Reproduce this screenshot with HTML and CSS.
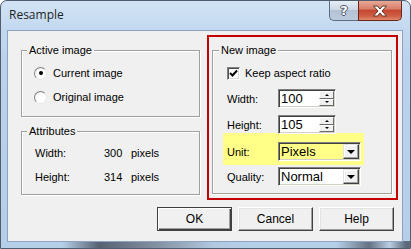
FILE: index.html
```html
<!DOCTYPE html>
<html>
<head>
<meta charset="utf-8">
<link rel="stylesheet" href="styles.css">
</head>
<body>
<div class="window">
  <div class="titlebar">
    <span class="title">Resample</span>
    <div class="caption-btns">
      <div class="cbtn cbtn-help"><span class="qmark">?</span></div>
      <div class="cbtn cbtn-close">
        <svg width="16" height="12" viewBox="0 0 16 12"><path d="M1.5 1 H5.5 L8 4 L10.5 1 H14.5 L10 6 L14.5 11 H10.5 L8 8 L5.5 11 H1.5 L6 6 Z" fill="#fff" stroke="#5a3026" stroke-width="1" stroke-linejoin="round"/></svg>
      </div>
    </div>
  </div>
  <div class="client">
    <div class="main">
      <div class="left-col">
        <fieldset class="group active-group">
          <legend>Active image</legend>
          <div class="radio-row"><span class="radio checked"></span><span>Current image</span></div>
          <div class="radio-row"><span class="radio"></span><span>Original image</span></div>
        </fieldset>
        <fieldset class="group attr-group">
          <legend>Attributes</legend>
          <div class="attr-row"><span class="attr-label">Width:</span><span class="attr-val">300</span><span>pixels</span></div>
          <div class="attr-row"><span class="attr-label">Height:</span><span class="attr-val">314</span><span>pixels</span></div>
        </fieldset>
      </div>
      <div class="red-box">
        <fieldset class="group new-group">
          <legend>New image</legend>
          <div class="check-row">
            <span class="checkbox"><svg width="9" height="9" viewBox="0 0 9 9"><path d="M1 4 L3.5 6.5 L8 1.5" fill="none" stroke="#000" stroke-width="2"/></svg></span>
            <span>Keep aspect ratio</span>
          </div>
          <div class="field-row width-row">
            <span class="field-label">Width:</span>
            <div class="spin"><span class="spin-text">100</span><div class="spin-btns"><span class="sbtn"><i class="up"></i></span><span class="sbtn"><i class="down"></i></span></div></div>
          </div>
          <div class="field-row height-row">
            <span class="field-label">Height:</span>
            <div class="spin"><span class="spin-text">105</span><div class="spin-btns"><span class="sbtn"><i class="up"></i></span><span class="sbtn"><i class="down"></i></span></div></div>
          </div>
          <div class="highlight">
            <div class="field-row">
              <span class="field-label">Unit:</span>
              <div class="combo combo-yellow"><span class="combo-text">Pixels</span><span class="drop"><i></i></span></div>
            </div>
          </div>
          <div class="field-row quality-row">
            <span class="field-label">Quality:</span>
            <div class="combo"><span class="combo-text">Normal</span><span class="drop"><i></i></span></div>
          </div>
        </fieldset>
      </div>
    </div>
    <div class="btn-row">
      <div class="btn btn-default">OK</div>
      <div class="btn">Cancel</div>
      <div class="btn">Help</div>
    </div>
  </div>
</div>
</body>
</html>
```

FILE: styles.css
```css
html, body {
  margin: 0;
  padding: 0;
  background: #fff;
}

body {
  font-family: "Liberation Sans", Arial, sans-serif;
  font-size: 11px;
  color: #000;
}

.window {
  width: 411px;
  height: 249px;
  box-sizing: border-box;
  border: 1px solid #4f5d6e;
  border-radius: 7px 7px 0 0;
  padding: 0 7px 6px 6px;
  display: flex;
  flex-direction: column;
  background:
    linear-gradient(to right, rgba(0,0,0,0) 15%, rgba(70,78,92,0.85) 24%, rgba(110,118,130,0.7) 38%, rgba(170,190,212,0.4) 52%, rgba(0,0,0,0) 60%, rgba(0,0,0,0) 82%, rgba(80,90,104,0.8) 90%, rgba(190,205,222,0.5) 95%, rgba(70,80,95,0.8) 99%) left bottom / 100% 7px no-repeat,
    linear-gradient(to bottom, #d3e3f5 0, #c3d9f0 28px, #bad2ec 60px, #b6cfe9 100%);
}

.titlebar {
  height: 29px;
  display: flex;
  justify-content: space-between;
  align-items: flex-start;
  flex: none;
}

.title {
  font-family: "Open Sans", "Liberation Sans", sans-serif;
  font-size: 12px;
  line-height: 16px;
  margin-top: 6px;
  padding-left: 2px;
  color: #1e1e1e;
}

.caption-btns {
  display: flex;
  margin-right: 1px;
}

.cbtn {
  height: 20px;
  box-sizing: border-box;
  display: flex;
  align-items: center;
  justify-content: center;
  border: 1px solid #5d6e84;
  border-top: none;
}

.cbtn-help {
  width: 29px;
  border-right: none;
  border-radius: 0 0 0 5px;
  background: linear-gradient(to bottom, #e6edf5 0, #cdd9e6 45%, #b3c3d5 50%, #bccbdc 100%);
}

.qmark {
  font-family: "DejaVu Sans", sans-serif;
  font-weight: bold;
  font-size: 13px;
  line-height: 14px;
  color: #fff;
  text-shadow: 1px 0 0 #4d5563, -1px 0 0 #4d5563, 0 1px 0 #4d5563, 0 -1px 0 #4d5563;
}

.cbtn-close {
  width: 44px;
  border-color: #6a2418;
  border-radius: 0 0 5px 0;
  background: linear-gradient(to bottom, #e9a896 0, #d9816d 40%, #c4492f 50%, #cf5f45 80%, #e08a6c 100%);
}

.client {
  flex: 1;
  box-sizing: border-box;
  border: 1px solid #8da3bf;
  background: #f0f0f0;
  display: flex;
  flex-direction: column;
}

.main {
  display: flex;
  align-items: flex-start;
  padding: 4px 0 0 13px;
  gap: 7px;
}

.left-col {
  width: 179px;
  margin-top: 9px;
  display: flex;
  flex-direction: column;
}

.group {
  margin: 0;
  padding: 0;
  border: 1px solid #a0a0a0;
  box-shadow: 1px 1px 0 #fff, inset 1px 1px 0 #fff;
  min-width: 0;
}

.group legend {
  padding: 0 2px;
  margin-left: 5px;
  line-height: 13px;
  height: 13px;
  background: #f0f0f0;
}

.active-group {
  padding: 4px 0 7px 12px;
}

.active-group legend {
  margin-left: -7px;
}

.radio-row {
  height: 24px;
  display: flex;
  align-items: center;
}

.radio {
  width: 13px;
  height: 13px;
  box-sizing: border-box;
  border-radius: 50%;
  border: 1px solid;
  border-color: #808080 #e8e8e8 #e8e8e8 #808080;
  background: radial-gradient(circle at 60% 60%, #fff 0, #fff 45%, #e4e4e4 100%);
  margin-right: 6px;
  display: flex;
  align-items: center;
  justify-content: center;
}

.radio.checked::after {
  content: "";
  width: 4px;
  height: 4px;
  border-radius: 50%;
  background: #000;
}

.attr-group {
  margin-top: 8px;
  padding: 3px 0 5px 13px;
}

.attr-group legend {
  margin-left: -8px;
}

.attr-row {
  height: 24px;
  display: flex;
  align-items: center;
}

.attr-label {
  width: 69px;
}

.attr-val {
  width: 27px;
}

.red-box {
  width: 191px;
  box-sizing: border-box;
  border: 2px solid #c40000;
  padding: 7px 4px 4px 3px;
}

.new-group {
  padding: 0 0 7px 14px;
}

.new-group legend {
  margin-left: -8px;
}

.check-row {
  margin-top: 9px;
  height: 14px;
  display: flex;
  align-items: center;
}

.checkbox {
  width: 13px;
  height: 13px;
  box-sizing: border-box;
  border: 1px solid;
  border-color: #808080 #fff #fff #808080;
  box-shadow: inset 1px 1px 0 #505050, inset -1px -1px 0 #dcdcdc;
  background: #fff;
  margin-right: 5px;
  display: flex;
  align-items: center;
  justify-content: center;
}

.field-row {
  height: 19px;
  display: flex;
  align-items: center;
}

.width-row {
  margin-top: 9px;
}

.height-row {
  margin-top: 7px;
}

.quality-row {
  margin-top: 2px;
}

.field-label {
  width: 51px;
}

.spin {
  width: 58px;
  height: 19px;
  box-sizing: border-box;
  border: 1px solid;
  border-color: #808080 #fff #fff #808080;
  box-shadow: inset 1px 1px 0 #404040, inset -1px -1px 0 #d4d0c8;
  background: #fff;
  display: flex;
  justify-content: space-between;
  padding: 1px 1px 1px 2px;
}

.spin-text,
.combo-text {
  font-size: 13px;
  line-height: 15px;
}

.spin-btns {
  width: 15px;
  display: flex;
  flex-direction: column;
}

.sbtn {
  flex: 1;
  box-sizing: border-box;
  background: #f0f0f0;
  border: 1px solid;
  border-color: #fff #696969 #696969 #fff;
  display: flex;
  align-items: center;
  justify-content: center;
}

.sbtn i {
  width: 0;
  height: 0;
  border-left: 2px solid transparent;
  border-right: 2px solid transparent;
}

.sbtn i.up {
  border-bottom: 2px solid #000;
}

.sbtn i.down {
  border-top: 2px solid #000;
}

.highlight {
  margin: -1px 0 0 -4px;
  width: 141px;
  box-sizing: border-box;
  padding: 9px 3px 4px 4px;
  background: #ffff88;
}

.combo {
  width: 83px;
  height: 19px;
  box-sizing: border-box;
  border: 1px solid;
  border-color: #808080 #fff #fff #808080;
  box-shadow: inset 1px 1px 0 #404040, inset -1px -1px 0 #d4d0c8;
  background: #fff;
  display: flex;
  justify-content: space-between;
  padding: 1px 1px 1px 2px;
}

.combo-yellow {
  background: #ffff88;
}

.drop {
  width: 16px;
  box-sizing: border-box;
  background: #f0f0f0;
  border: 1px solid;
  border-color: #e3e3e3 #404040 #404040 #e3e3e3;
  box-shadow: inset -1px -1px 0 #a0a0a0, inset 1px 1px 0 #fff;
  display: flex;
  align-items: center;
  justify-content: center;
}

.drop i {
  width: 0;
  height: 0;
  border-left: 4px solid transparent;
  border-right: 4px solid transparent;
  border-top: 4px solid #000;
}

.btn-row {
  display: flex;
  justify-content: flex-end;
  gap: 6px;
  margin-top: 7px;
  padding-right: 8px;
}

.btn {
  width: 75px;
  height: 24px;
  box-sizing: border-box;
  background: #f0f0f0;
  border: 1px solid;
  border-color: #fff #404040 #404040 #fff;
  box-shadow: inset -1px -1px 0 #a0a0a0, inset 1px 1px 0 #e3e3e3;
  display: flex;
  align-items: center;
  justify-content: center;
  font-size: 12px;
}

.btn-default {
  border: 1px solid #404040;
  box-shadow: inset 1px 1px 0 #fff, inset -1px -1px 0 #404040, inset -2px -2px 0 #a0a0a0;
}
```
